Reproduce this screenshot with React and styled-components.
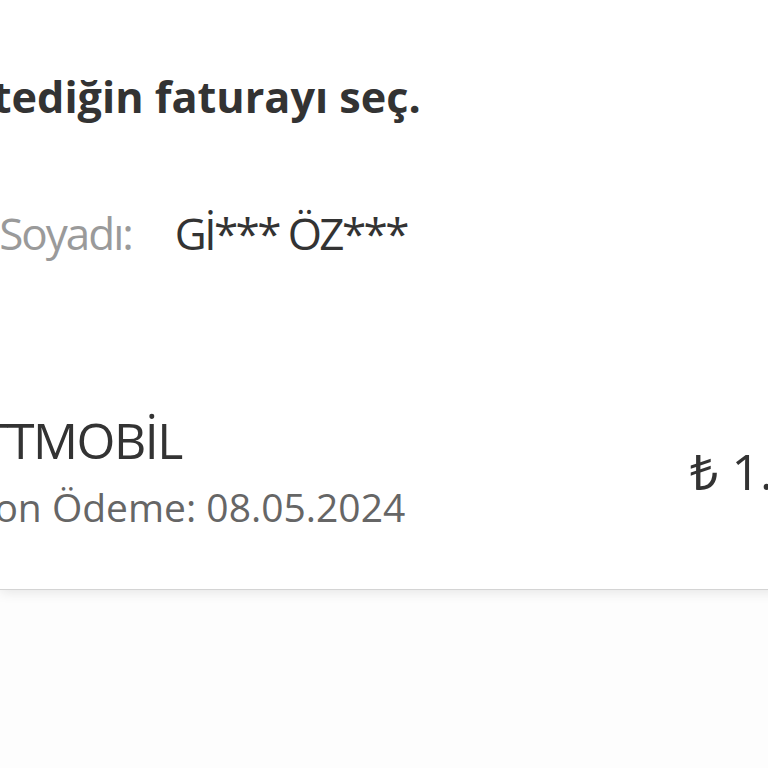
import React from "react";
import styled, { createGlobalStyle } from "styled-components";

const Global = createGlobalStyle`
  html, body {
    margin: 0;
    padding: 0;
    background: #fdfdfd;
    overflow: hidden;
  }
  body {
    font-family: "Open Sans", "Noto Sans", sans-serif;
    -webkit-font-smoothing: antialiased;
  }
`;

const Viewport = styled.div`
  width: 768px;
  height: 768px;
  overflow: hidden;
`;

const Stage = styled.div`
  width: 1000px;
`;

const Card = styled.section`
  background: #ffffff;
  padding: 75px 0 63px;
  box-shadow: 0 1px 0 #d4d4d4, 0 3px 12px rgba(0, 0, 0, 0.1);
  display: flex;
  flex-direction: column;
`;

const Title = styled.h1`
  margin: 0 0 0 ${(p) => p.$shift}px;
  font-size: 43.2px;
  line-height: 1;
  font-weight: 700;
  color: #333333;
  white-space: nowrap;
`;

const InfoRow = styled.div`
  margin: 93px 0 0 ${(p) => p.$shift}px;
  display: grid;
  grid-template-columns: auto 1fr;
  column-gap: 43px;
  font-size: 44px;
  line-height: 1;
  white-space: nowrap;
`;

const Label = styled.span`
  color: #9a9a9a;
  letter-spacing: -2px;
`;

const Value = styled.span`
  color: #333333;
  letter-spacing: -2.6px;
`;

const Bill = styled.div`
  margin: 160px 0 0 ${(p) => p.$shift}px;
  display: flex;
  align-items: center;
  justify-content: space-between;
  padding-right: 71px;
`;

const BillInfo = styled.div`
  display: flex;
  flex-direction: column;
  gap: 22px;
  white-space: nowrap;
`;

const Operator = styled.div`
  font-size: 50px;
  letter-spacing: -1.5px;
  line-height: 1;
  color: #333333;
`;

const DueDate = styled.div`
  margin-left: -8px;
  font-size: 39px;
  line-height: 1;
  color: #666666;
`;

const Amount = styled.div`
  font-size: 50px;
  line-height: 1;
  color: #333333;
  white-space: nowrap;
`;

export default function App() {
  return (
    <Viewport>
      <Global />
      <Stage>
        <Card>
          <Title $shift={-235}>Ödemek istediğin faturayı seç.</Title>
          <InfoRow $shift={-61}>
            <Label>Ad Soyadı:</Label>
            <Value>Gİ*** ÖZ***</Value>
          </InfoRow>
          <Bill $shift={-19}>
            <BillInfo>
              <Operator>TTMOBİL</Operator>
              <DueDate>Son Ödeme: 08.05.2024</DueDate>
            </BillInfo>
            <Amount>₺ 1.245,50</Amount>
          </Bill>
        </Card>
      </Stage>
    </Viewport>
  );
}
